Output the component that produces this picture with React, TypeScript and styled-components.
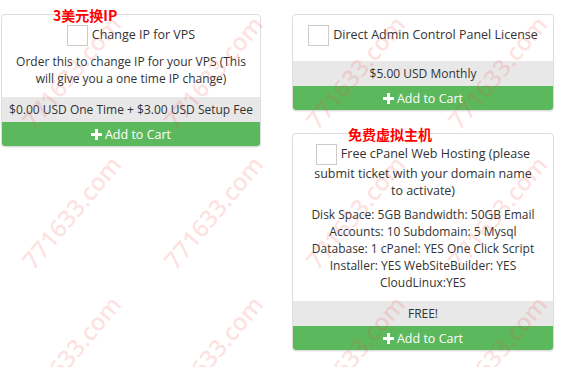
import * as React from 'react';
import styled, { createGlobalStyle } from 'styled-components';

const GlobalStyle = createGlobalStyle`
  body {
    margin: 0;
    background: #fff;
    font-family: 'Open Sans', 'Noto Sans', sans-serif;
    color: #333;
  }
`;

const Page = styled.div`
  position: relative;
  width: 565px;
  height: 367px;
  overflow: hidden;
  padding: 14px 0 0 1px;
  box-sizing: border-box;
`;

const Columns = styled.div`
  display: grid;
  grid-template-columns: 260px 262px;
  column-gap: 31px;
  align-items: start;
`;

const Column = styled.div`
  display: flex;
  flex-direction: column;
  gap: 22px;
`;

const Wrap = styled.div`
  position: relative;
`;

const Card = styled.div`
  position: relative;
  border: 1px solid #ddd;
  border-radius: 4px;
  overflow: hidden;
  background: #fff;
  box-shadow: 0 1px 1px rgba(0, 0, 0, 0.06);
`;

const Body = styled.div`
  padding: 10px 12px 10px;
  text-align: center;
  font-size: 12px;
  line-height: 17px;
`;

const Title = styled.div`
  font-size: 12.5px;
  line-height: 17px;
  padding: 0 2.5px;
  margin-bottom: 5px;
`;

const Desc = styled.div`
  padding-top: 2px;
`;

const Check = styled.span`
  display: inline-block;
  width: 19px;
  height: 19px;
  border: 1px solid #cfcac3;
  vertical-align: middle;
  margin-right: 4px;
`;

const Price = styled.div`
  background: #e8e8e8;
  height: 25px;
  line-height: 25px;
  text-align: center;
  font-size: 12px;
`;

const CartButton = styled.div`
  background: #5cb85c;
  color: #fff;
  height: 24px;
  display: flex;
  align-items: center;
  justify-content: center;
  gap: 3px;
  font-size: 12.5px;
`;

const Tag = styled.div<{ $left: number }>`
  position: absolute;
  top: -7px;
  left: ${(p) => p.$left}px;
  color: #f00;
  font-family: 'Noto Sans CJK SC', 'Noto Sans', sans-serif;
  font-weight: 700;
  font-size: 14px;
  line-height: 16px;
  z-index: 2;
`;

const Watermarks = styled.div`
  position: absolute;
  inset: 0;
  pointer-events: none;
  z-index: 3;
`;

const Mark = styled.span`
  position: absolute;
  transform: translate(-50%, -50%) rotate(-50deg);
  font-family: 'Open Sans', sans-serif;
  font-size: 24px;
  font-weight: 600;
  color: rgba(245, 70, 70, 0.17);
  white-space: nowrap;
`;

function Plus() {
  return (
    <svg width="11" height="11" viewBox="0 0 11 11">
      <path d="M4 0h3v4h4v3H7v4H4V7H0V4h4z" fill="#fff" />
    </svg>
  );
}

type Product = {
  title: string;
  desc?: string;
  price: string;
};

function ProductCard({ title, desc, price }: Product) {
  return (
    <Card>
      <Body>
        <Title>
          <Check />
          {title}
        </Title>
        {desc && <Desc>{desc}</Desc>}
      </Body>
      <Price>{price}</Price>
      <CartButton>
        <Plus />
        Add to Cart
      </CartButton>
    </Card>
  );
}

const markX = [71, 213, 355, 497];
const markY = [72, 212, 352];

export default function App() {
  return (
    <Page>
      <GlobalStyle />
      <Columns>
        <Column>
          <Wrap>
            <Tag $left={52}>3美元换IP</Tag>
            <ProductCard
              title="Change IP for VPS"
              desc="Order this to change IP for your VPS (This will give you a one time IP change)"
              price="$0.00 USD One Time + $3.00 USD Setup Fee"
            />
          </Wrap>
        </Column>
        <Column>
          <ProductCard
            title="Direct Admin Control Panel License"
            price="$5.00 USD Monthly"
          />
          <Wrap>
            <Tag $left={56}>免费虚拟主机</Tag>
            <ProductCard
              title="Free cPanel Web Hosting (please submit ticket with your domain name to activate)"
              desc="Disk Space: 5GB Bandwidth: 50GB Email Accounts: 10 Subdomain: 5 Mysql Database: 1 cPanel: YES One Click Script Installer: YES WebSiteBuilder: YES CloudLinux:YES"
              price="FREE!"
            />
          </Wrap>
        </Column>
      </Columns>
      <Watermarks>
        {markY.map((y) =>
          markX.map((x) => (
            <Mark key={`${x}-${y}`} style={{ left: x, top: y }}>
              771633.com
            </Mark>
          ))
        )}
      </Watermarks>
    </Page>
  );
}
